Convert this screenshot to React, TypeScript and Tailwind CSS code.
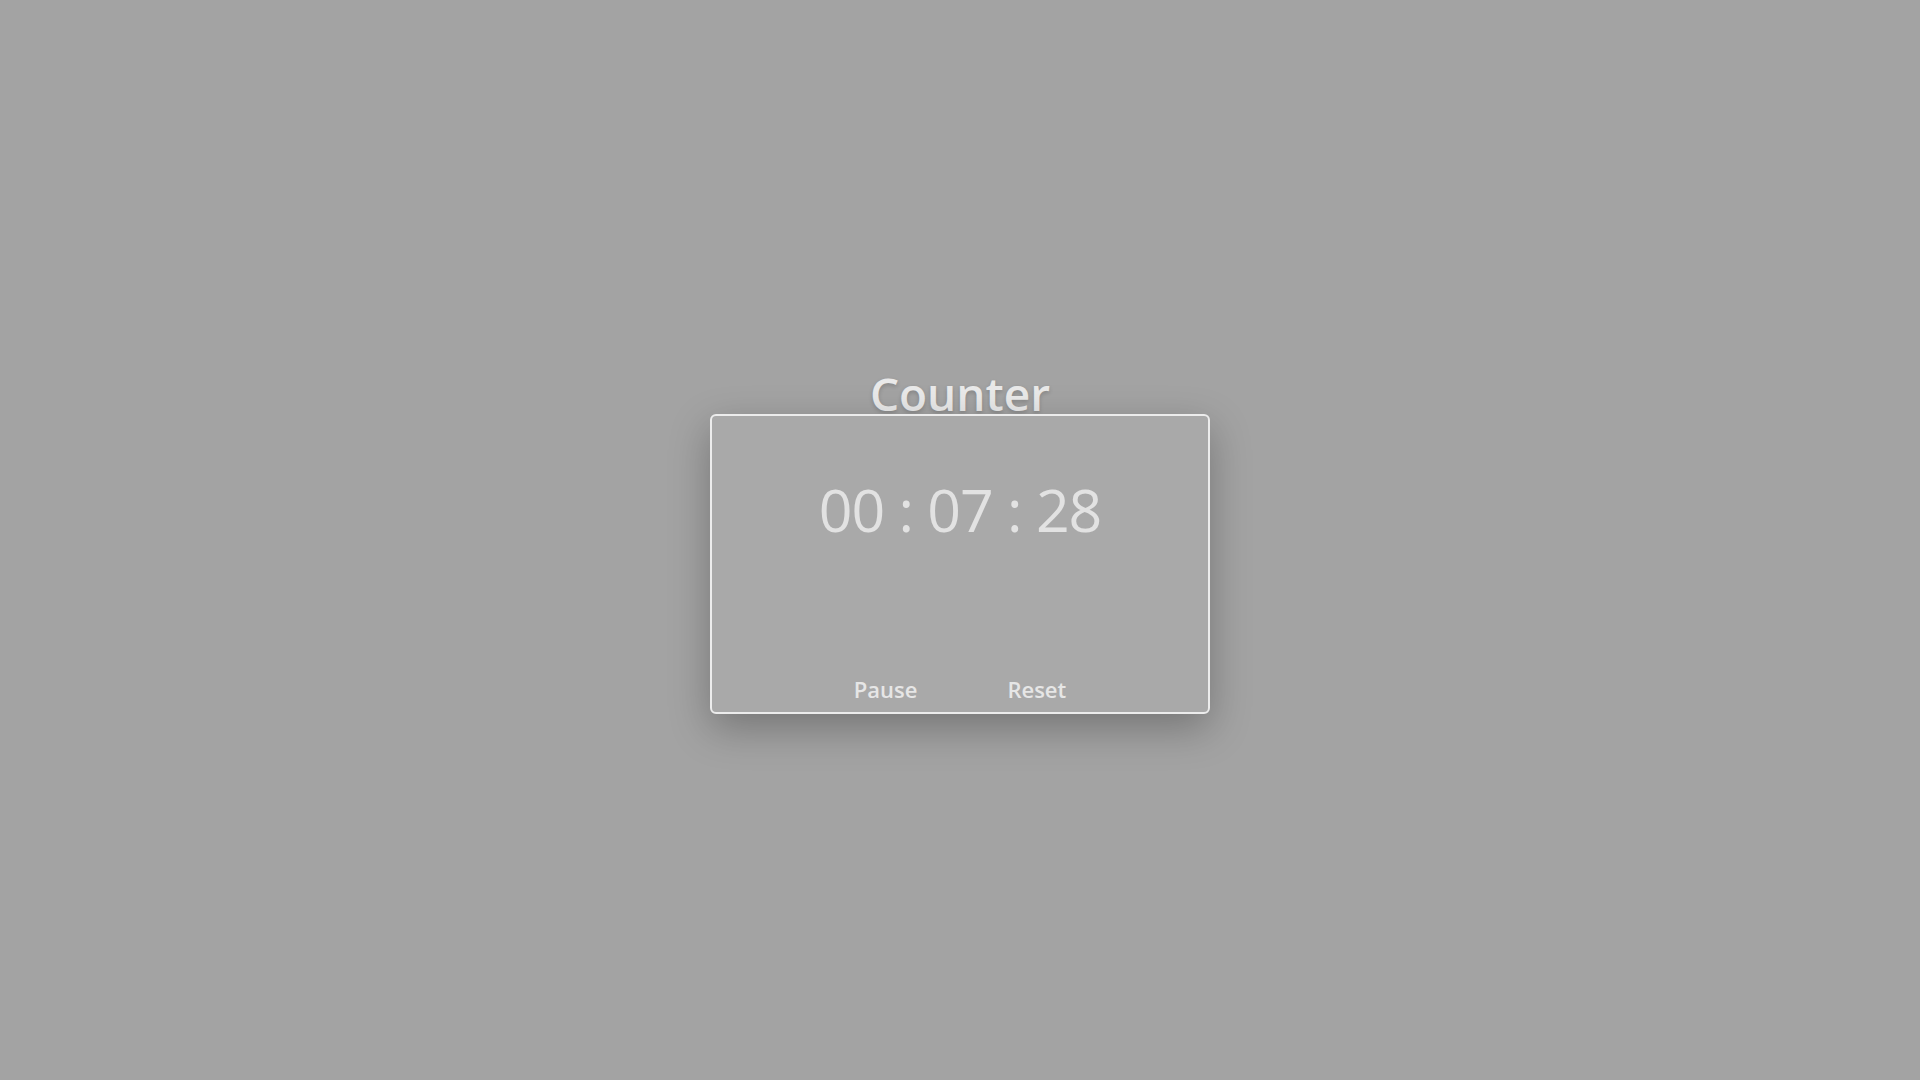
export default function App() {
  return (
    <div className="flex min-h-screen w-full items-center justify-center bg-[#a3a3a3] font-['Open_Sans',sans-serif]">
      <div className="flex flex-col items-center pt-[4px]">
        <h1 className="mb-[-2px] text-[46px] leading-none font-semibold text-[#e9e9e9] [text-shadow:0_2px_4px_rgba(0,0,0,0.18)]">
          Counter
        </h1>
        <div className="flex h-[300px] w-[500px] flex-col items-center justify-between rounded-md border-2 border-[#ececec] bg-[#a9a9a9] pt-[64px] pb-[12px] shadow-[0_14px_40px_rgba(0,0,0,0.28)]">
          <div className="text-[59px] leading-none font-normal tracking-[-1px] text-[#e2e2e2]">00 : 07 : 28</div>
          <div className="flex items-center gap-[90px]">
            <button type="button" className="text-[22px] leading-none font-semibold text-[#e6e6e6]">
              Pause
            </button>
            <button type="button" className="text-[22px] leading-none font-semibold text-[#e6e6e6]">
              Reset
            </button>
          </div>
        </div>
      </div>
    </div>
  )
}
